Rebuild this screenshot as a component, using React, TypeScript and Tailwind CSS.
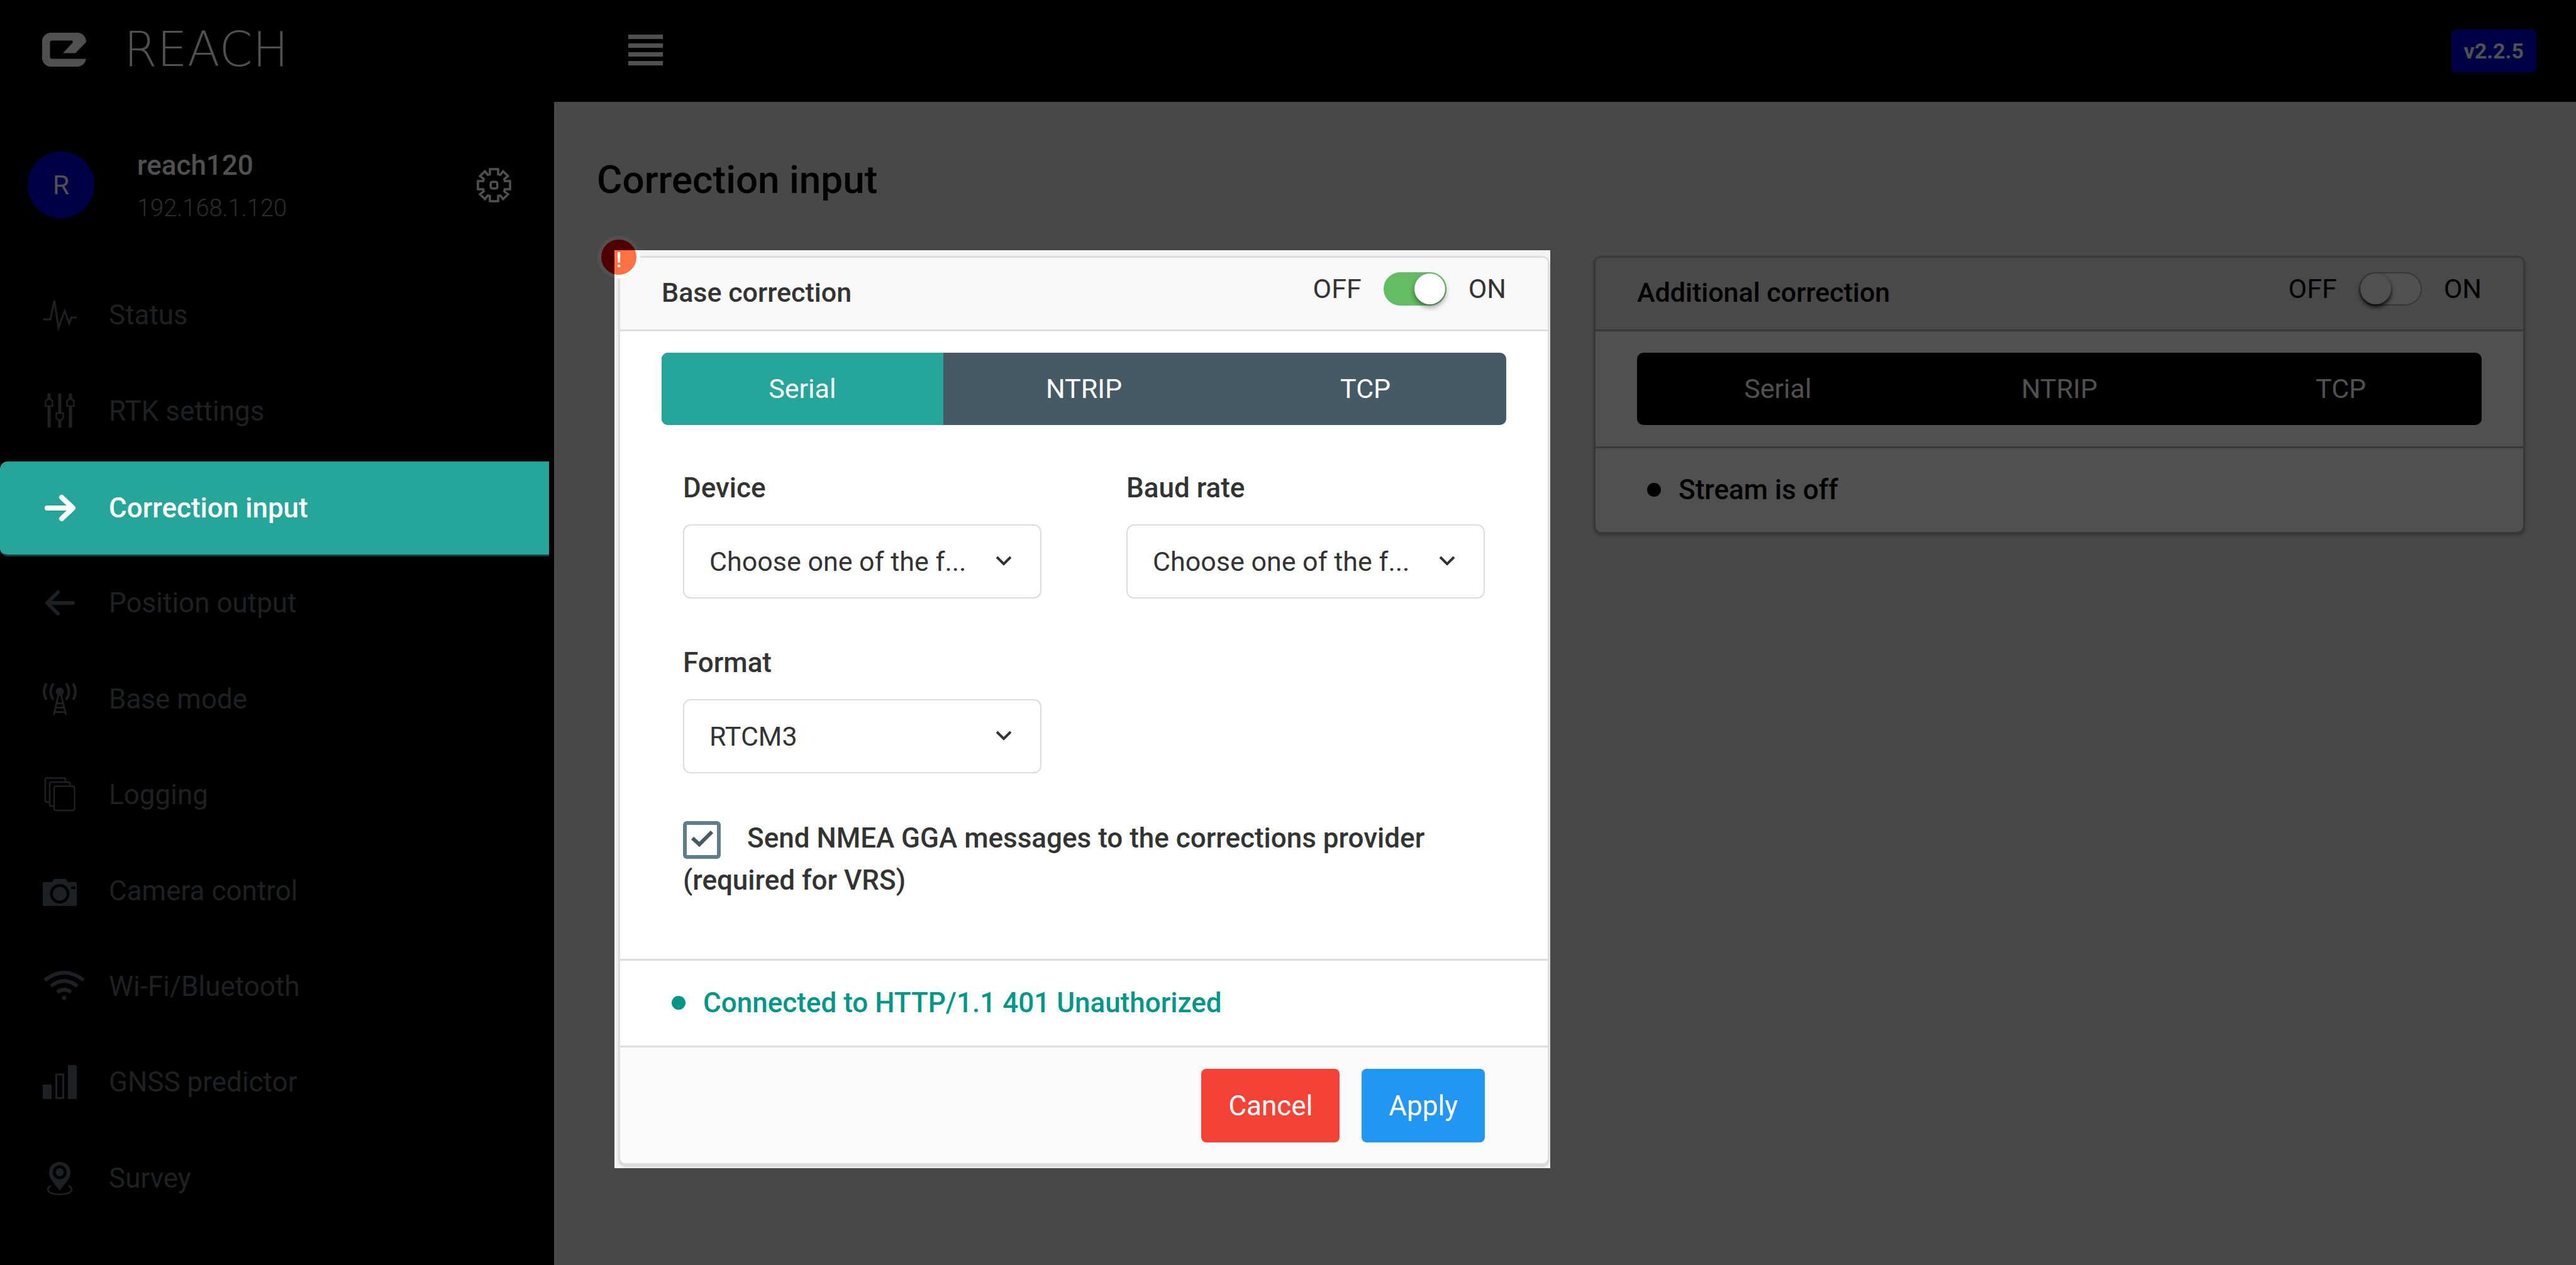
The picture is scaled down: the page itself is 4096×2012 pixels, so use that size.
import type { ReactNode } from "react";

type IconProps = { children: ReactNode };

function NavSvg({ children }: IconProps) {
  return (
    <svg viewBox="0 0 56 56" className="size-14 shrink-0 overflow-visible" fill="none" stroke="currentColor" aria-hidden="true">
      {children}
    </svg>
  );
}

const icons = {
  status: (
    <NavSvg>
      <path d="M1.5 35H13L19.5 5L26 48L36 21.5L43 41.5L46.5 32H55" strokeWidth="3" />
    </NavSvg>
  ),
  rtk: (
    <NavSvg>
      <path d="M11 0V9M11 20V54M28 0V31M28 42V54M45 0V9M45 20V54" strokeWidth="5" />
      <path d="M8.5 9h5l3 3v8h-11v-8zM42.500 9h5l3 3v8h-11v-8zM22.500 31h11v8l-3 3h-5l-3-3z" strokeWidth="2.500" />
    </NavSvg>
  ),
  right: (
    <NavSvg>
      <path d="M8 28H48M31 11L49 28L31 45" strokeWidth="8" strokeLinecap="round" strokeLinejoin="round" />
    </NavSvg>
  ),
  left: (
    <NavSvg>
      <path d="M8 28H49M25 11L8 28L25 45" strokeWidth="6" strokeLinecap="round" strokeLinejoin="round" />
    </NavSvg>
  ),
  antenna: (
    <NavSvg>
      <circle cx="28" cy="16" r="6.500" fill="currentColor" stroke="none" />
      <path d="M7 3Q-1 16 7 29M18 3Q9 16 18 29M38 3Q47 16 38 29M49 3Q57 16 49 29" strokeWidth="4" />
      <path d="M26 21L18.500 53M30 21L38 53M24 34.700H32M22 41.600H34M20 48.600H36" strokeWidth="3" />
    </NavSvg>
  ),
  files: (
    <NavSvg>
      <rect x="19" y="14.500" width="32.500" height="38.500" rx="3" strokeWidth="2.500" />
      <path d="M19 46H14.500a2.500 2.500 0 0 1-2.500-2.500V10.500A2.500 2.500 0 0 1 14.500 8H42a2.500 2.500 0 0 1 2.500 2.500V14" strokeWidth="2.500" />
      <path d="M12 40H7.500A2.500 2.500 0 0 1 5 37.500V4A2.500 2.500 0 0 1 7.500 1.500H34.500A2.500 2.500 0 0 1 37 4V8" strokeWidth="2.500" />
    </NavSvg>
  ),
  camera: (
    <NavSvg>
      <path
        fill="currentColor"
        stroke="none"
        fillRule="evenodd"
        d="M1 16Q1 14 3 14H16L19 9H38L41 14H53Q55 14 55 16V50Q55 52 53 52H3Q1 52 1 50ZM28 17A15.500 15.500 0 1 0 28 48A15.500 15.500 0 1 0 28 17ZM46 21V25H53V21Z"
      />
      <circle cx="28" cy="32.500" r="11" fill="currentColor" stroke="none" />
    </NavSvg>
  ),
  wifi: (
    <NavSvg>
      <path d="M4 18Q35 -6 66 18M14 27.500Q35 11 56 27.500M24 37Q35 29 46 37" strokeWidth="6" />
      <circle cx="35" cy="46" r="3.500" fill="currentColor" stroke="none" />
    </NavSvg>
  ),
  bars: (
    <NavSvg>
      <path d="M1 32H15V55H1ZM41 1H55V55H41Z" fill="currentColor" stroke="none" />
      <path d="M22.500 16H33.500V53.500H22.500Z" strokeWidth="3" />
    </NavSvg>
  ),
  survey: (
    <NavSvg>
      <path
        fill="currentColor"
        stroke="none"
        fillRule="evenodd"
        d="M28 2C18 2 11 9 11 19C11 30 21 37 28 48C35 37 45 30 45 19C45 9 38 2 28 2ZM28 7.500A11 11 0 1 1 28 29.500A11 11 0 1 1 28 7.500Z"
      />
      <circle cx="28" cy="18.500" r="6.500" fill="currentColor" stroke="none" />
      <path d="M14 40C7 43 8 49 14 51.500Q28 56 42 51.500C48 49 49 43 42 40" strokeWidth="2.500" />
    </NavSvg>
  ),
};

const navItems = [
  { label: "Status", icon: icons.status },
  { label: "RTK settings", icon: icons.rtk },
  { label: "Correction input", icon: icons.right, active: true },
  { label: "Position output", icon: icons.left },
  { label: "Base mode", icon: icons.antenna },
  { label: "Logging", icon: icons.files },
  { label: "Camera control", icon: icons.camera },
  { label: "Wi-Fi/Bluetooth", icon: icons.wifi },
  { label: "GNSS predictor", icon: icons.bars },
  { label: "Survey", icon: icons.survey },
];

function Header() {
  return (
    <header className="flex h-[162px] items-center bg-black pb-1">
      <div className="flex w-[881px] shrink-0 items-center pl-[67px]">
        <svg viewBox="0 0 70 54" className="h-[54px] w-[70px]" fill="#505050" aria-hidden="true">
          <path d="M12 0H58Q68 2 70 12.500V15L53 32.500H33L48.500 16V12.500H14.500L12.500 14.500V39.500L14.500 41.500H70Q68 52 58 54H12Q2 52 0 42V12Q2 2 12 0Z" />
        </svg>
        <span className="ml-[60px] font-['DejaVu_Sans'] text-[76px] leading-[80px] font-extralight text-[#505050]">REACH</span>
      </div>
      <button type="button" aria-label="Toggle menu" className="ml-[118px] flex w-[55px] flex-col gap-[7px]">
        <span className="h-[7px] bg-[#505050]" />
        <span className="h-[7px] bg-[#505050]" />
        <span className="h-[7px] bg-[#505050]" />
        <span className="h-[7px] bg-[#505050]" />
      </button>
      <span className="mt-1 mr-[63px] ml-auto rounded-lg bg-[#000046] px-5 text-[34px] leading-[68px] font-bold text-[#505050]">v2.2.5</span>
    </header>
  );
}

function Sidebar() {
  return (
    <aside className="flex w-[881px] shrink-0 flex-col bg-black pb-[60px]">
      <div className="flex items-center pt-[60px] pr-[68px] pl-11">
        <div className="flex size-[106px] items-center justify-center rounded-full bg-[#000046] text-[43px] text-[#505050]">R</div>
        <div className="ml-[68px] pt-2">
          <div className="text-[44px] leading-[66px] font-medium text-[#505050]">reach120</div>
          <div className="text-[38px] leading-[70px] font-light text-[#2a2e30]">192.168.1.120</div>
        </div>
        <button type="button" aria-label="Device settings" className="ml-auto">
          <svg viewBox="-156 -156 312 312" className="size-[55px]" fill="none" stroke="#505050" strokeWidth="20" aria-hidden="true">
            <path d="M-37 -145H37V-97L56 -93L82 -126L126 -82L93 -56L97 -37H145V37H97L93 56L126 82L82 126L56 93L37 97V145H-37V97L-56 93L-82 126L-126 82L-93 56L-97 37H-145V-37H-97L-93 -56L-126 -82L-82 -126L-56 -93L-37 -97Z" />
            <rect x="-30" y="-30" width="60" height="60" rx="16" />
          </svg>
        </button>
      </div>
      <nav className="mt-[61px] flex flex-1 flex-col">
        {navItems.map((item) => (
          <a
            key={item.label}
            href="#"
            aria-current={item.active ? "page" : undefined}
            className={
              item.active
                ? "mt-0.5 mr-2 flex min-h-[148px] flex-1 items-center gap-[50px] rounded-l-xl border-b-3 border-[#1d3b39] bg-[#26a69a] pl-[67px] text-[44px] font-medium text-white"
                : "mr-2 flex min-h-[148px] flex-1 items-center gap-[50px] pb-1 pl-[67px] text-[44px] text-[#1d2123]"
            }
          >
            {item.icon}
            {item.label}
          </a>
        ))}
      </nav>
    </aside>
  );
}

function Chevron() {
  return (
    <svg viewBox="0 0 26 16" className="pointer-events-none absolute top-[50px] right-[47px] h-4 w-[26px]" fill="none" stroke="#333" strokeWidth="4" aria-hidden="true">
      <path d="M2 2L13 13L24 2" />
    </svg>
  );
}

function SelectField({ id, label, value }: { id: string; label: string; value: string }) {
  return (
    <div className="flex flex-col gap-[25px]">
      <label htmlFor={id} className="text-[44px] leading-[66px] font-medium text-[#333]">
        {label}
      </label>
      <div className="relative">
        <select id={id} className="h-[118px] w-full appearance-none rounded-xl border-2 border-[#ddd] bg-white px-[40px] text-[43px] text-[#333]">
          <option>{value}</option>
        </select>
        <Chevron />
      </div>
    </div>
  );
}

const tabNames = ["Serial", "NTRIP", "TCP"];

function BaseCorrection() {
  return (
    <div className="relative -mt-[9px] -mr-px -ml-[6px]">
      <span className="absolute -top-[23px] -left-[27px] size-[68px] rounded-full border-[6px] border-[#505050] bg-[#500000]" />
      <div className="relative overflow-hidden bg-[#f3f3f3] pt-[9px] pr-px pb-[5px] pl-[6px]">
        <section className="rounded-xl border-3 border-[#ddd] bg-white shadow-[0_3px_3px_rgba(0,0,0,0.12)]">
          <div className="flex h-[117px] items-center justify-between rounded-t-lg border-b-3 border-[#ddd] bg-[#f8f8f8] px-[66px] text-[#333]">
            <h2 className="pb-1 text-[43px] font-medium">Base correction</h2>
            <label className="flex items-center gap-[35px] pb-4 text-[43px]">
              <span>OFF</span>
              <input
                type="checkbox"
                role="switch"
                defaultChecked
                aria-label="Base correction"
                className="flex h-[53px] w-[100px] appearance-none items-center justify-end rounded-full bg-[#64bd63] px-0.5 before:size-[49px] before:rounded-full before:bg-white before:shadow-[0_4px_8px_rgba(0,0,0,0.45)]"
              />
              <span>ON</span>
            </label>
          </div>
          <div className="border-b-3 border-[#ddd] px-[66px] pt-[34px] pb-[91px]">
            <div className="grid grid-cols-3 overflow-hidden rounded-[10px] bg-[#455a64]">
              {tabNames.map((name, i) => (
                <button
                  key={name}
                  type="button"
                  className={i === 0 ? "h-[115px] bg-[#26a69a] text-[43px] text-white" : "h-[115px] text-[43px] text-white"}
                >
                  {name}
                </button>
              ))}
            </div>
            <form className="px-[34px] pt-[67px]">
              <div className="grid grid-cols-2 gap-x-[135px] gap-y-[69px]">
                <SelectField id="device" label="Device" value="Choose one of the f..." />
                <SelectField id="baud" label="Baud rate" value="Choose one of the f..." />
                <SelectField id="format" label="Format" value="RTCM3" />
              </div>
              <div className="mt-[70px] text-[44px] leading-[67px] font-medium text-[#333]">
                <span className="relative mr-[42px] inline-block size-[60px] align-middle">
                  <input id="gga" type="checkbox" defaultChecked className="block size-[60px] appearance-none rounded-md border-[6px] border-[#607d8b] bg-white" />
                  <svg viewBox="0 0 60 60" className="pointer-events-none absolute inset-0 size-[60px]" fill="none" stroke="#455a64" strokeWidth="6" aria-hidden="true">
                    <path d="M15 27L26 37L46 17" />
                  </svg>
                </span>
                <label htmlFor="gga">Send NMEA GGA messages to the corrections provider (required for VRS)</label>
              </div>
            </form>
          </div>
          <div className="flex h-[138px] items-center gap-7 border-b-3 border-[#ddd] pb-0.5 pl-[82px] text-[44px] font-medium text-[#009688]">
            <span className="size-[22px] rounded-full bg-[#009688]" />
            Connected to HTTP/1.1 401 Unauthorized
          </div>
          <div className="flex justify-end gap-[35px] rounded-b-lg bg-[#fbfbfb] px-[100px] pt-[34px] pb-[33px] text-[44px] text-white">
            <button type="button" className="h-[117px] rounded-lg bg-[#f44336] px-[43px]">
              Cancel
            </button>
            <button type="button" className="h-[117px] rounded-lg bg-[#2196f3] px-[43px]">
              Apply
            </button>
          </div>
        </section>
        <span className="absolute -top-[23px] -left-[27px] size-[68px] rounded-full border-[6px] border-white bg-[#ff7043]" />
      </div>
      <span className="absolute -top-[23px] -left-[27px] flex size-[68px] items-center justify-center pt-2 text-[33px] leading-none font-medium text-white">!</span>
    </div>
  );
}

function AdditionalCorrection() {
  return (
    <section className="self-start rounded-xl border-3 border-[#383838] bg-[#505050] text-black shadow-[0_3px_5px_rgba(0,0,0,0.25)]">
      <div className="flex h-[117px] items-center justify-between rounded-t-lg border-b-3 border-[#383838] bg-[#494949] px-[66px]">
        <h2 className="pb-1 text-[43px] font-medium">Additional correction</h2>
        <label className="flex items-center gap-[35px] pb-4 text-[43px]">
          <span>OFF</span>
          <input
            type="checkbox"
            role="switch"
            aria-label="Additional correction"
            className="flex h-[53px] w-[100px] appearance-none items-center rounded-full border-2 border-[#383838] bg-[#505050] before:size-[49px] before:rounded-full before:bg-[#505050] before:shadow-[0_4px_6px_rgba(0,0,0,0.9)]"
          />
          <span>ON</span>
        </label>
      </div>
      <div className="border-b-3 border-[#383838] px-[66px] py-[34px]">
        <div className="grid grid-cols-3 overflow-hidden rounded-[10px] bg-black">
          {tabNames.map((name) => (
            <button key={name} type="button" className="h-[115px] text-[43px] text-[#505050]">
              {name}
            </button>
          ))}
        </div>
      </div>
      <div className="flex h-[133px] items-center gap-7 pb-0.5 pl-[82px] text-[44px] font-medium">
        <span className="size-[22px] rounded-full bg-black" />
        Stream is off
      </div>
    </section>
  );
}

export default function App() {
  return (
    <div className="flex min-h-screen flex-col bg-[#484848] font-['Roboto',sans-serif]">
      <Header />
      <div className="flex flex-1">
        <Sidebar />
        <main className="flex-1 pt-[84px] pr-[81px] pb-20 pl-[68px]">
          <h1 className="text-[62px] leading-[80px] font-medium text-black">Correction input</h1>
          <div className="mt-[81px] grid grid-cols-2 gap-[70px] pl-[34px]">
            <BaseCorrection />
            <AdditionalCorrection />
          </div>
        </main>
      </div>
    </div>
  );
}
